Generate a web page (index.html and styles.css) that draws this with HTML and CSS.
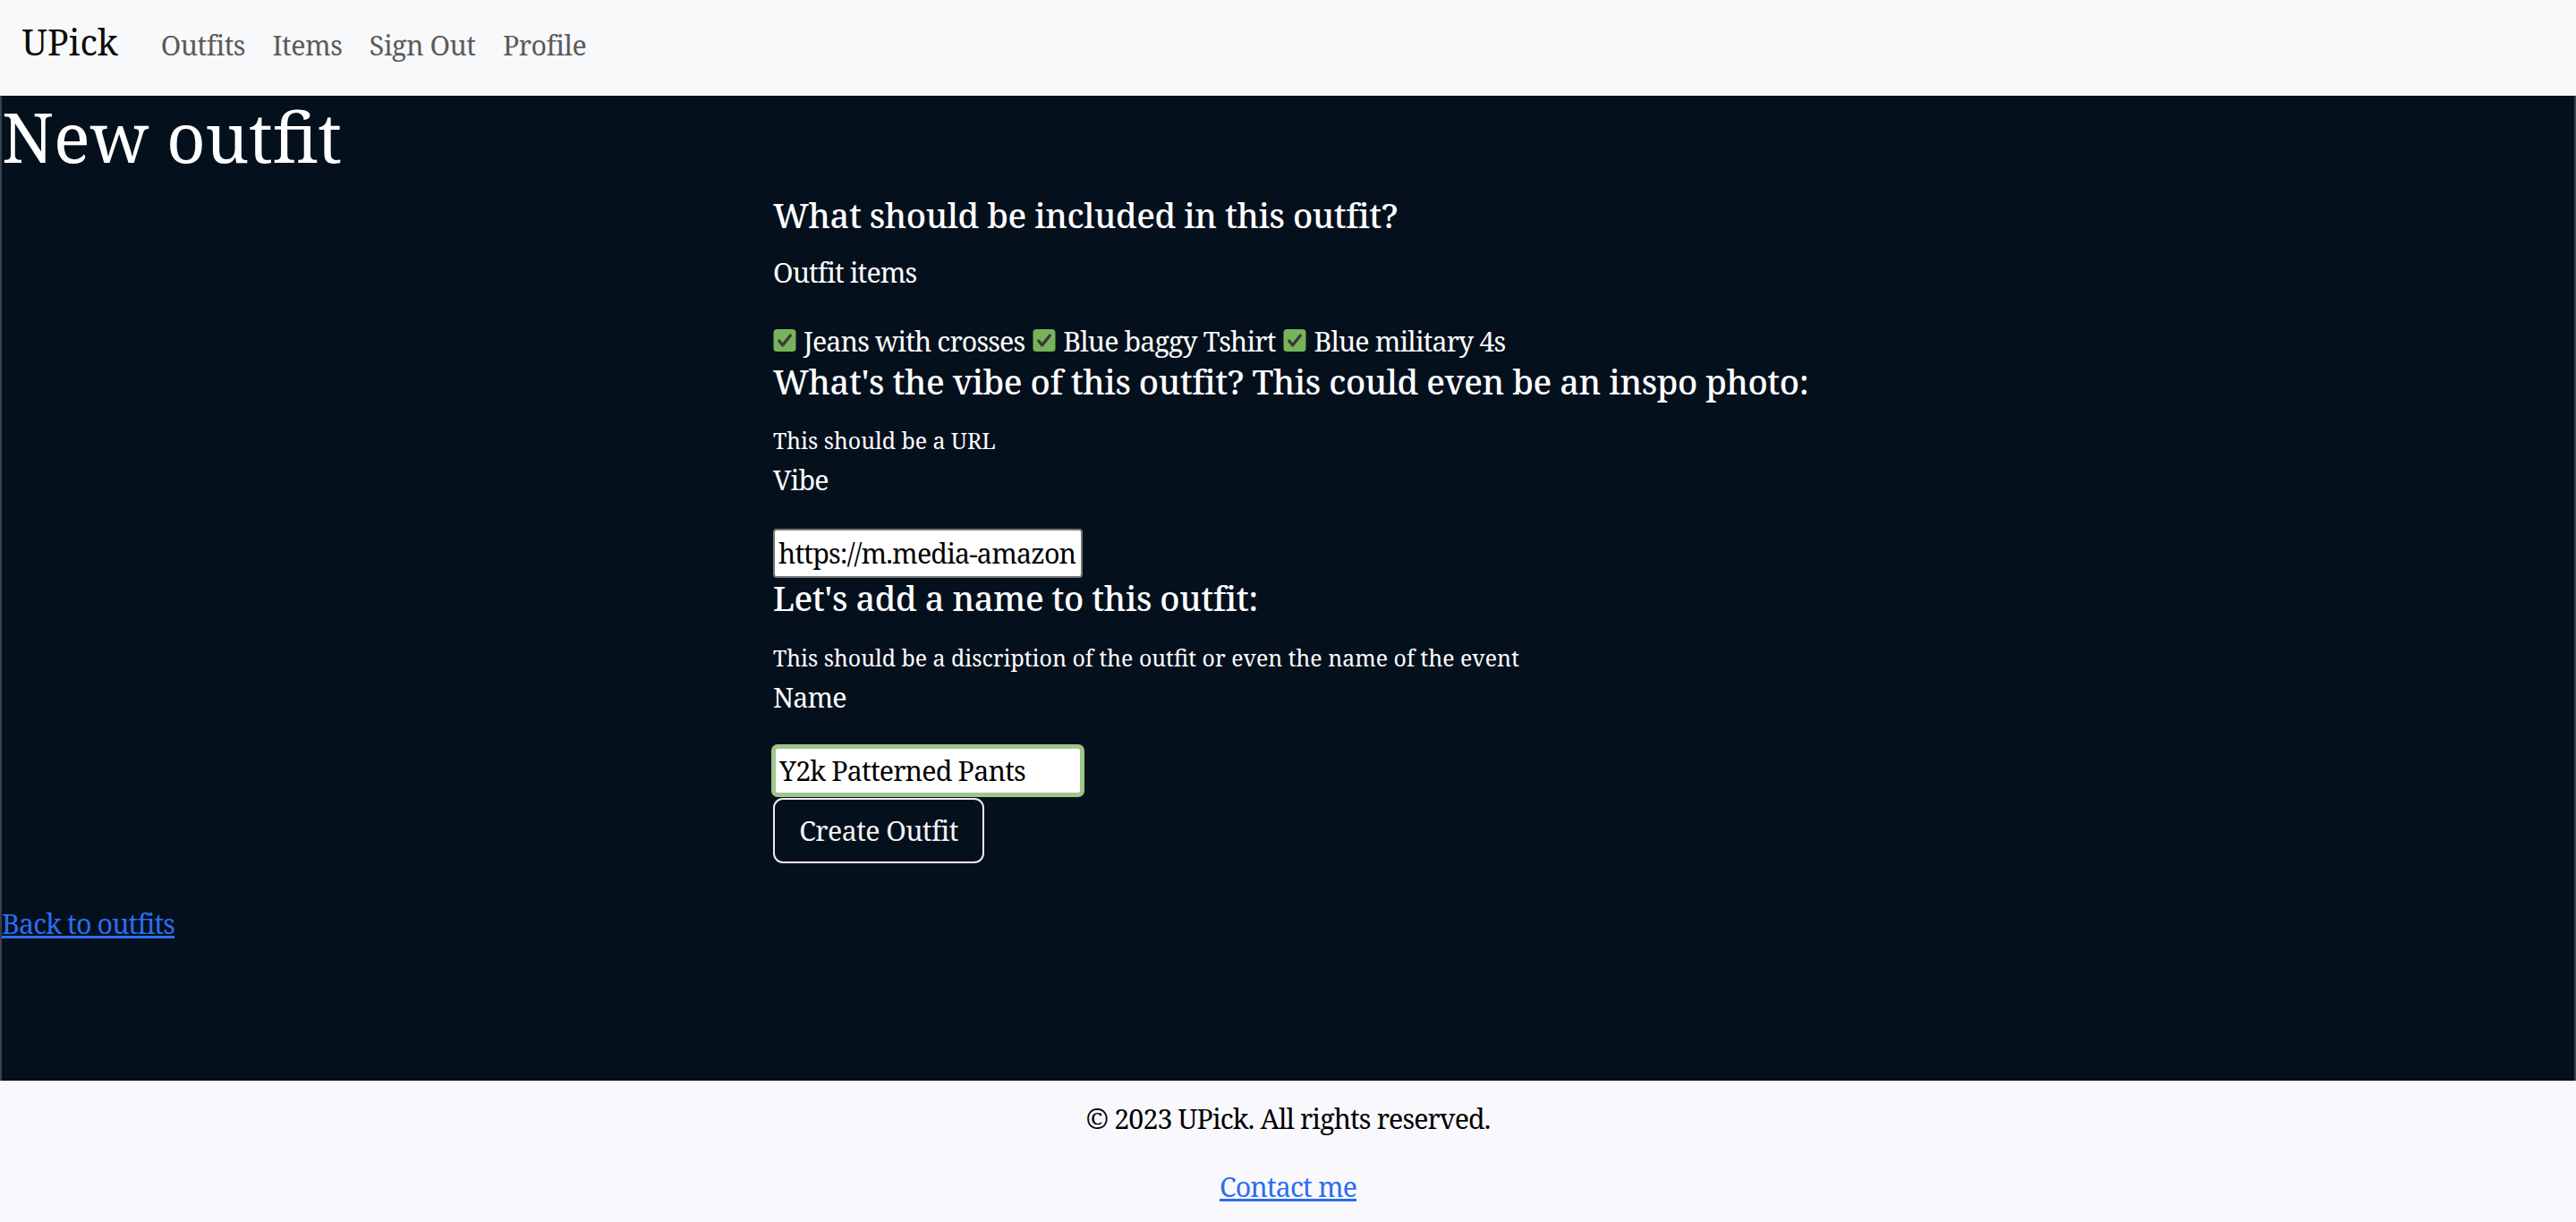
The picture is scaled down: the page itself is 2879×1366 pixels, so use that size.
FILE: index.html
```html
<!DOCTYPE html>
<html lang="en">
<head>
<meta charset="utf-8">
<title>UPick - New outfit</title>
<link rel="stylesheet" href="styles.css">
</head>
<body>
<nav class="navbar">
  <a class="brand" href="#">UPick</a>
  <ul class="nav">
    <li><a class="nav-link" href="#">Outfits</a></li>
    <li><a class="nav-link" href="#">Items</a></li>
    <li><a class="nav-link" href="#">Sign Out</a></li>
    <li><a class="nav-link" href="#">Profile</a></li>
  </ul>
</nav>
<main class="main">
  <h1 class="title">New outfit</h1>
  <form class="outfit-form">
    <h5 class="q q-first">What should be included in this outfit?</h5>
    <label class="field-label label-items">Outfit items</label>
    <div class="check-row">
      <span class="check"><svg class="emoji" viewBox="0 0 26 26"><rect x="0" y="0" width="26" height="26" rx="4" fill="#78b25a"/><path d="M6.5 13.6 L10.6 18.6 L19.6 7.2" fill="none" stroke="#3a3a3c" stroke-width="3.4" stroke-linecap="round" stroke-linejoin="round"/></svg> Jeans with crosses</span>
      <span class="check"><svg class="emoji" viewBox="0 0 26 26"><rect x="0" y="0" width="26" height="26" rx="4" fill="#78b25a"/><path d="M6.5 13.6 L10.6 18.6 L19.6 7.2" fill="none" stroke="#3a3a3c" stroke-width="3.4" stroke-linecap="round" stroke-linejoin="round"/></svg> Blue baggy Tshirt</span>
      <span class="check"><svg class="emoji" viewBox="0 0 26 26"><rect x="0" y="0" width="26" height="26" rx="4" fill="#78b25a"/><path d="M6.5 13.6 L10.6 18.6 L19.6 7.2" fill="none" stroke="#3a3a3c" stroke-width="3.4" stroke-linecap="round" stroke-linejoin="round"/></svg> Blue military 4s</span>
    </div>
    <h5 class="q q-vibe">What's the vibe of this outfit? This could even be an inspo photo:</h5>
    <div class="hint"><small>This should be a URL</small></div>
    <label class="field-label label-input">Vibe</label>
    <input class="text-input" type="text" value="https://m.media-amazon.com/images/I/61y2k.jpg">
    <h5 class="q q-name">Let's add a name to this outfit:</h5>
    <div class="hint"><small>This should be a discription of the outfit or even the name of the event</small></div>
    <label class="field-label label-input">Name</label>
    <input class="text-input text-input-valid" type="text" value="Y2k Patterned Pants">
    <div class="actions"><button class="btn" type="button">Create Outfit</button></div>
  </form>
  <a class="back-link" href="#">Back to outfits</a>
</main>
<footer class="footer">
  <p class="copy">© 2023 UPick. All rights reserved.</p>
  <p class="contact"><a class="footer-link" href="#">Contact me</a></p>
</footer>
</body>
</html>
```
FILE: styles.css
```css
html, body {
  margin: 0;
  padding: 0;
}
body {
  font-family: "Noto Serif", "DejaVu Serif", serif;
  font-size: 30.4px;
  line-height: 1.5;
  letter-spacing: -0.9px;
  background: #f9f9fd;
  color: #000;
}
.navbar {
  height: 107px;
  box-sizing: border-box;
  background: #f8f9fa;
  display: flex;
  align-items: baseline;
  padding: 18px 22.8px 0 24.6px;
}
.brand {
  font-size: 39.5px;
  line-height: 1.5;
  letter-spacing: 0;
  color: #0c0c0c;
  text-decoration: none;
  margin-right: 32.5px;
}
.nav {
  list-style: none;
  margin: 0;
  padding: 0;
  display: flex;
}
.nav-link {
  display: block;
  padding: 0 15.2px;
  letter-spacing: -0.5px;
  color: #5a5b5c;
  text-decoration: none;
}
.main {
  min-height: 1101px;
  box-sizing: border-box;
  background: #05101d;
  color: #fff;
  border-left: 2px solid #3b414b;
  border-right: 2px solid #3b414b;
}
.title {
  margin: 0 0 19.5px;
  font-size: 76px;
  line-height: 1.2;
  font-weight: 400;
  letter-spacing: 0;
}
.outfit-form {
  margin-left: 862px;
}
.q {
  margin: 0;
  font-size: 38px;
  line-height: 1.2;
  font-weight: 500;
  letter-spacing: -0.45px;
}
.q-first {
  margin-bottom: 18.3px;
}
.q-vibe {
  margin-bottom: 18.7px;
}
.q-name {
  margin-top: 0;
  margin-bottom: 19.2px;
}
.field-label {
  display: block;
}
.label-items {
  margin-bottom: 31.4px;
}
.label-input {
  margin-bottom: 31.8px;
}
.check-row {
  display: flex;
  gap: 9px;
}
.emoji {
  width: 26px;
  height: 25px;
  vertical-align: baseline;
  margin-right: 1px;
}
.hint small {
  font-size: 0.82em;
  letter-spacing: 0;
}
.text-input {
  display: block;
  box-sizing: border-box;
  width: 346px;
  height: 55px;
  margin: 0;
  padding: 0 4px;
  font-family: inherit;
  font-size: 30.4px;
  letter-spacing: -0.85px;
  color: #000;
  background: #fff;
  border: 2px solid #767676;
  border-radius: 4px;
}
.text-input-valid {
  border: 3px solid #9dc68c;
  box-shadow: 0 0 0 2px #9dc68c;
  border-radius: 5px;
  padding: 0 4px;
}
.actions {
  margin-top: 3px;
  margin-bottom: 45px;
}
.btn {
  box-sizing: border-box;
  width: 236px;
  font-family: inherit;
  font-size: 30.4px;
  line-height: 1.5;
  letter-spacing: -0.6px;
  color: #f4f4f4;
  background: transparent;
  border: 2px solid #ececec;
  border-radius: 11px;
  padding: 11.4px 0;
  margin: 0;
  text-align: center;
}
.back-link {
  color: #2c6df0;
  text-decoration: underline;
}
.footer {
  height: 158px;
  box-sizing: border-box;
  padding-top: 20px;
  text-align: center;
  background: #f9f9fd;
}
.footer p {
  margin: 0;
}
.copy {
  margin-bottom: 30.4px !important;
}
.footer-link {
  color: #2c6df0;
  text-decoration: underline;
}
```
